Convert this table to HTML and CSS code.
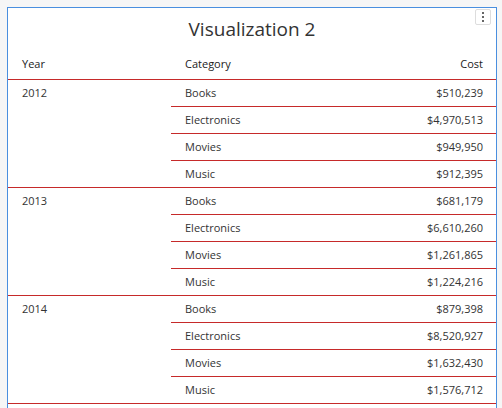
FILE: index.html
```html
<!DOCTYPE html>
<html>
<head>
<meta charset="utf-8">
<link rel="stylesheet" href="styles.css">
</head>
<body>
<div class="card">
  <div class="title">Visualization 2</div>
  <button class="menu" aria-label="menu"><span></span><span></span><span></span></button>
  <div class="header">
    <div class="c-year">Year</div>
    <div class="c-rest"><span>Category</span><span>Cost</span></div>
  </div>
  <div class="group">
    <div class="c-year">2012</div>
    <div class="subs">
      <div class="sub"><span>Books</span><span>$510,239</span></div>
      <div class="sub"><span>Electronics</span><span>$4,970,513</span></div>
      <div class="sub"><span>Movies</span><span>$949,950</span></div>
      <div class="sub"><span>Music</span><span>$912,395</span></div>
    </div>
  </div>
  <div class="group">
    <div class="c-year">2013</div>
    <div class="subs">
      <div class="sub"><span>Books</span><span>$681,179</span></div>
      <div class="sub"><span>Electronics</span><span>$6,610,260</span></div>
      <div class="sub"><span>Movies</span><span>$1,261,865</span></div>
      <div class="sub"><span>Music</span><span>$1,224,216</span></div>
    </div>
  </div>
  <div class="group">
    <div class="c-year">2014</div>
    <div class="subs">
      <div class="sub"><span>Books</span><span>$879,398</span></div>
      <div class="sub"><span>Electronics</span><span>$8,520,927</span></div>
      <div class="sub"><span>Movies</span><span>$1,632,430</span></div>
      <div class="sub"><span>Music</span><span>$1,576,712</span></div>
    </div>
  </div>
</div>
</body>
</html>
```
FILE: styles.css
```css
html, body {
  margin: 0;
  padding: 0;
  background: #f6f6f6;
  overflow: hidden;
}
body {
  padding: 7px 5px 0 7px;
  font-family: "Open Sans", "Liberation Sans", sans-serif;
  color: #333;
}
.card {
  position: relative;
  background: #fff;
  border: 1px solid #4a8fdf;
  border-bottom: none;
  height: 420px;
}
.title {
  height: 45px;
  display: flex;
  align-items: center;
  justify-content: center;
  font-size: 19px;
  color: #333;
  padding-bottom: 3px;
  box-sizing: border-box;
}
.menu {
  position: absolute;
  top: 1px;
  right: 5px;
  width: 16px;
  height: 16px;
  padding: 0;
  border: 1px solid #ddd;
  border-radius: 2px;
  background: #fff;
  display: flex;
  flex-direction: column;
  align-items: center;
  justify-content: center;
  gap: 2px;
  box-sizing: border-box;
}
.menu span {
  width: 2px;
  height: 2px;
  background: #666;
}
.header {
  display: grid;
  grid-template-columns: 163px 325px;
  height: 27px;
  border-bottom: 1px solid #c62a2a;
  box-sizing: border-box;
  font-size: 11px;
  color: #222;
}
.header .c-year,
.header .c-rest {
  line-height: 22px;
}
.header .c-rest {
  display: flex;
  justify-content: space-between;
  padding: 0 13px 0 14px;
}
.c-year {
  padding-left: 14px;
  font-size: 11px;
  line-height: 26px;
}
.group {
  display: grid;
  grid-template-columns: 163px 325px;
  border-bottom: 1px solid #c62a2a;
}
.subs {
  min-width: 0;
}
.sub {
  display: flex;
  justify-content: space-between;
  height: 26px;
  line-height: 26px;
  font-size: 11px;
  padding: 0 13px 0 14px;
}
.sub + .sub {
  border-top: 1px solid #c62a2a;
}
```
